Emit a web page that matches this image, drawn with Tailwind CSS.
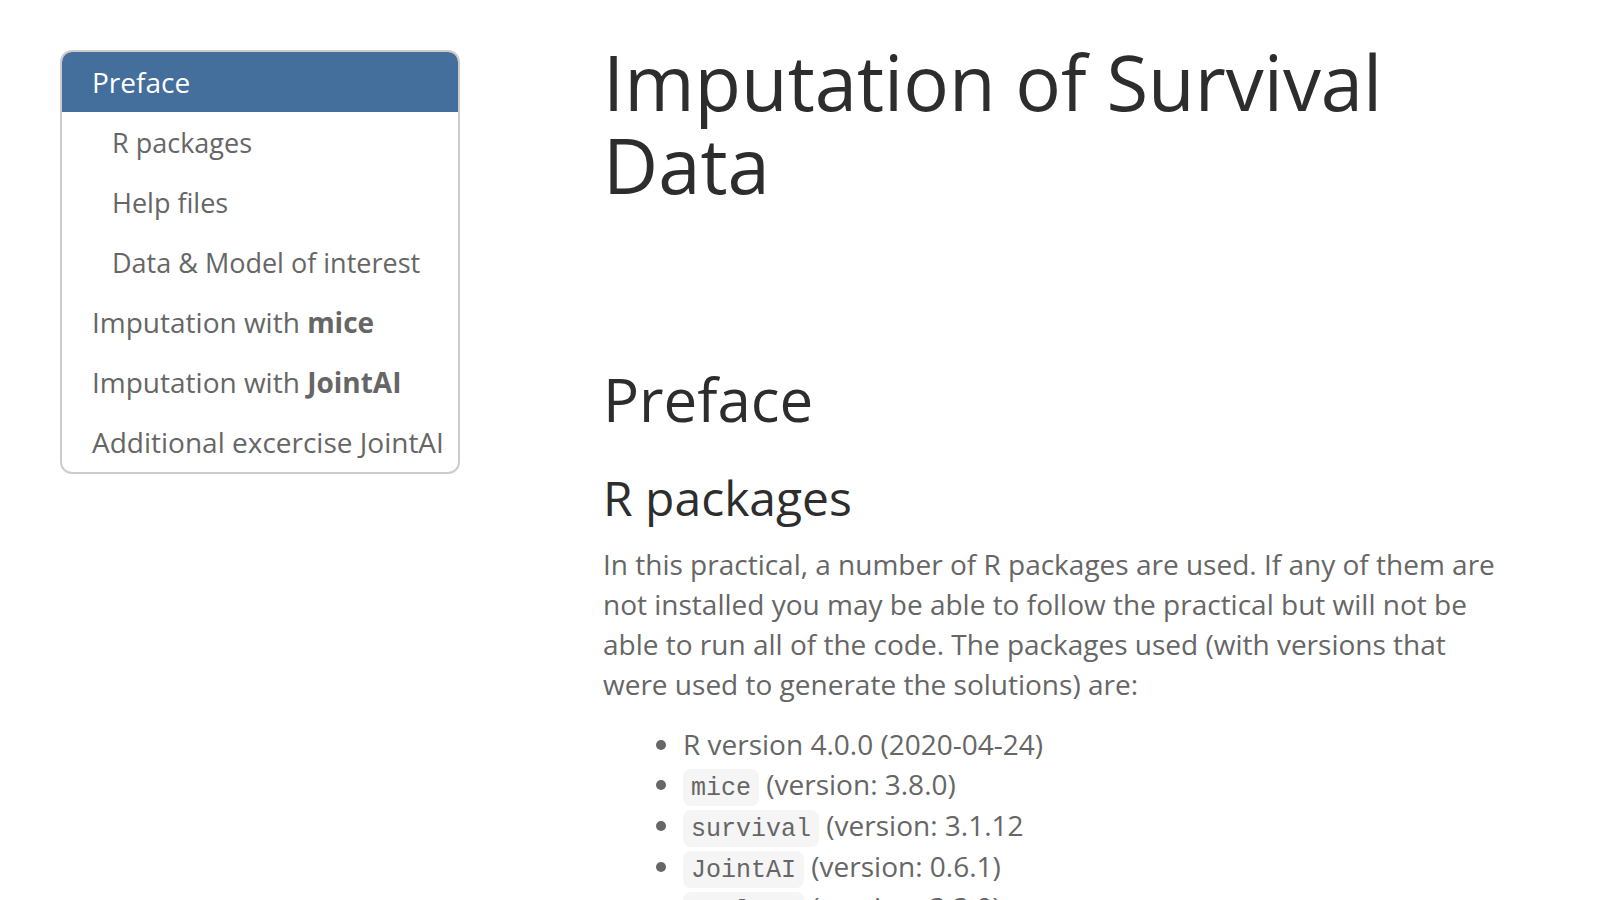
<!DOCTYPE html>
<html lang="en">
<head>
<meta charset="utf-8">
<title>Imputation of Survival Data</title>
<script src="https://cdn.jsdelivr.net/npm/@tailwindcss/browser@4"></script>
</head>
<body class="bg-white font-['Open_Sans',sans-serif] text-[28px] leading-[40px] text-[#666]">
<div class="flex items-start pl-[60px] pr-[100px] pt-[40px]">
  <nav aria-label="Table of contents" class="mt-[10px] mr-[143px] w-[400px] shrink-0 overflow-hidden rounded-xl border-2 border-[#ccc]">
    <a href="#preface" class="block bg-[#446e9b] py-[10px] pl-[30px] text-white">Preface</a>
    <a href="#r-packages" class="block pt-[11px] pb-[9px] pl-[50px] text-[27px]">R packages</a>
    <a href="#help" class="block pt-[11px] pb-[9px] pl-[50px] text-[27px]">Help files</a>
    <a href="#data" class="block pt-[11px] pb-[9px] pl-[50px] text-[27px]">Data &amp; Model of interest</a>
    <a href="#mice" class="block py-[10px] pl-[30px]">Imputation with <strong>mice</strong></a>
    <a href="#jointai" class="block py-[10px] pl-[30px]">Imputation with <strong>JointAI</strong></a>
    <a href="#additional" class="block py-[10px] pl-[30px] whitespace-nowrap">Additional excercise JointAI</a>
  </nav>
  <main class="min-w-0 flex-1">
    <h1 class="text-[76px] leading-[83px] text-[#2d2d2d]">Imputation of Survival Data</h1>
    <h2 id="preface" class="mt-[160px] text-[60px] leading-[66px] text-[#2d2d2d]">Preface</h2>
    <h3 id="r-packages" class="mt-[40px] text-[48px] leading-[52px] text-[#2d2d2d]">R packages</h3>
    <p class="mt-5">In this practical, a number of R packages are used. If any of them are not installed you may be able to follow the practical but will not be able to run all of the code. The packages used (with versions that were used to generate the solutions) are:</p>
    <ul class="mt-5 list-disc pl-20">
      <li>R version 4.0.0 (2020-04-24)</li>
      <li class="leading-[41px]"><code class="rounded-lg bg-[#f5f5f5] px-2 pt-[5px] pb-[3px] font-['Liberation_Mono',monospace] text-[25px] leading-none">mice</code> (version: 3.8.0)</li>
      <li class="leading-[41px]"><code class="rounded-lg bg-[#f5f5f5] px-2 pt-[5px] pb-[3px] font-['Liberation_Mono',monospace] text-[25px] leading-none">survival</code> (version: 3.1.12</li>
      <li class="leading-[41px]"><code class="rounded-lg bg-[#f5f5f5] px-2 pt-[5px] pb-[3px] font-['Liberation_Mono',monospace] text-[25px] leading-none">JointAI</code> (version: 0.6.1)</li>
      <li class="leading-[41px]"><code class="rounded-lg bg-[#f5f5f5] px-2 pt-[5px] pb-[3px] font-['Liberation_Mono',monospace] text-[25px] leading-none">ggplot2</code> (version: 3.3.0)</li>
    </ul>
  </main>
</div>
</body>
</html>
